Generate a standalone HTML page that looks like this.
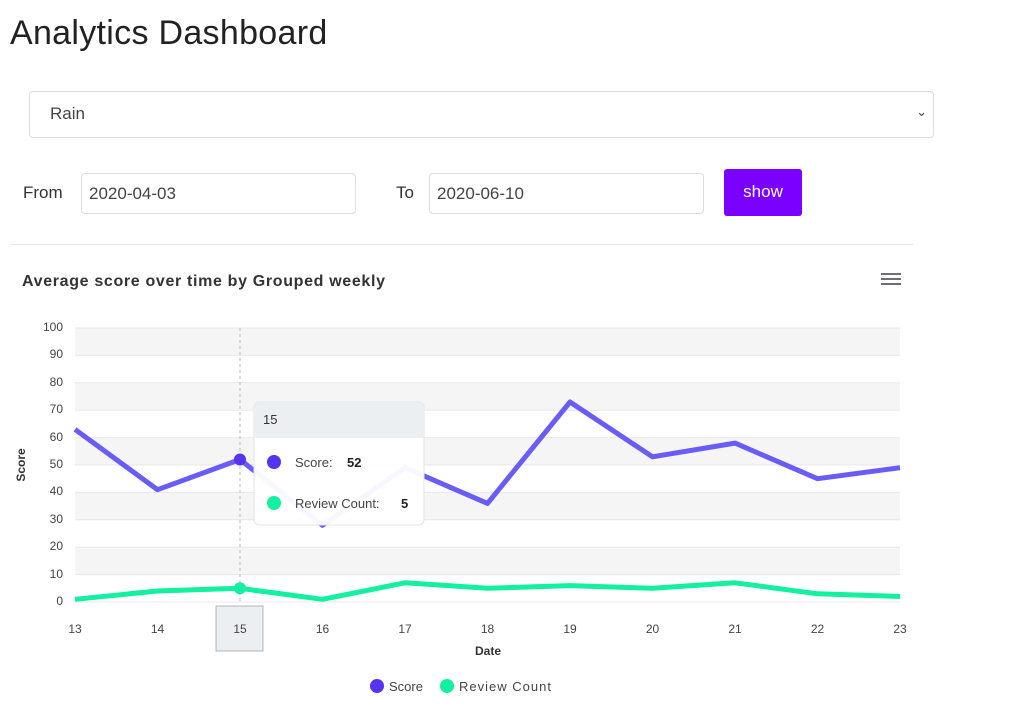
<!DOCTYPE html>
<html><head><meta charset="utf-8"><style>
body{margin:0;width:1011px;height:716px;background:#fff;font-family:"Liberation Sans",sans-serif;position:relative;overflow:hidden}
.a{position:absolute}
h1{position:absolute;left:10px;top:14px;margin:0;font-weight:400;font-size:34px;color:#222;letter-spacing:0.3px}
.inp{position:absolute;border:1px solid #dcdce4;border-radius:4px;background:#fff;font-size:17px;color:#444;box-sizing:border-box}
</style></head><body>
<h1>Analytics Dashboard</h1>
<div class="inp" style="left:29px;top:91px;width:905px;height:47px;padding:12px 20px">Rain<span style="position:absolute;right:6px;top:12px;font-size:13px">⌄</span></div>
<div class="a" style="left:23px;top:183px;font-size:17px;color:#333">From</div>
<div class="inp" style="left:81px;top:173px;width:275px;height:41px;padding:10px 7px">2020-04-03</div>
<div class="a" style="left:396px;top:183px;font-size:17px;color:#333">To</div>
<div class="inp" style="left:429px;top:173px;width:275px;height:41px;padding:10px 7px">2020-06-10</div>
<div class="a" style="left:724px;top:169px;width:78px;height:47px;background:#7a00ff;border-radius:3px;color:#fff;font-size:17px;text-align:center;line-height:46px">show</div>
<div class="a" style="left:10px;top:244px;width:903px;height:1px;background:#e6e6ea"></div>
<svg class="a" style="left:0;top:0" width="1011" height="716" font-family="Liberation Sans, sans-serif">
<text x="22" y="286" font-size="16" font-weight="bold" fill="#333" textLength="363">Average score over time by Grouped weekly</text>
<g stroke="#6e6e7a" stroke-width="2"><line x1="881" y1="274" x2="901" y2="274"/><line x1="881" y1="279" x2="901" y2="279"/><line x1="881" y1="284" x2="901" y2="284"/></g>
<g fill="#f5f5f5"><rect x="75" y="328" width="825" height="27.4"/><rect x="75" y="382.8" width="825" height="27.4"/><rect x="75" y="437.6" width="825" height="27.4"/><rect x="75" y="492.4" width="825" height="27.4"/><rect x="75" y="547.2" width="825" height="27.4"/></g>
<g stroke="#e8e8e8" stroke-width="1">
<line x1="75" x2="900" y1="328" y2="328"/><line x1="75" x2="900" y1="355.4" y2="355.4"/><line x1="75" x2="900" y1="382.8" y2="382.8"/><line x1="75" x2="900" y1="410.2" y2="410.2"/><line x1="75" x2="900" y1="437.6" y2="437.6"/><line x1="75" x2="900" y1="465" y2="465"/><line x1="75" x2="900" y1="492.4" y2="492.4"/><line x1="75" x2="900" y1="519.8" y2="519.8"/><line x1="75" x2="900" y1="547.2" y2="547.2"/><line x1="75" x2="900" y1="574.6" y2="574.6"/><line x1="75" x2="900" y1="602" y2="602"/></g>
<g font-size="12" fill="#444" text-anchor="end">
<text x="63" y="331">100</text><text x="63" y="358">90</text><text x="63" y="386">80</text><text x="63" y="413">70</text><text x="63" y="441">60</text><text x="63" y="468">50</text><text x="63" y="495">40</text><text x="63" y="523">30</text><text x="63" y="550">20</text><text x="63" y="578">10</text><text x="63" y="605">0</text></g>
<text transform="translate(25,465) rotate(-90)" font-size="12" font-weight="bold" fill="#333" text-anchor="middle">Score</text>
<line x1="240" y1="328" x2="240" y2="602" stroke="#bbb" stroke-dasharray="3,3"/>
<polyline fill="none" stroke="#6a5cf6" stroke-width="5" stroke-linejoin="round" points="75,429.4 157.5,489.7 240,459.5 322.5,525.3 405,467.7 487.5,503.4 570,402 652.5,456.8 735,443.1 817.5,478.7 900,467.7"/>
<polyline fill="none" stroke="#12f0a0" stroke-width="5" stroke-linejoin="round" points="75,599.3 157.5,591 240,588.3 322.5,599.3 405,582.8 487.5,588.3 570,585.6 652.5,588.3 735,582.8 817.5,593.8 900,596.5"/>
<circle cx="240" cy="459.5" r="6" fill="#5533f0"/><circle cx="240" cy="588.3" r="6" fill="#12f0a0"/>
<g font-size="12" fill="#444" text-anchor="middle">
<text x="75" y="633">13</text><text x="157.5" y="633">14</text><text x="322.5" y="633">16</text><text x="405" y="633">17</text><text x="487.5" y="633">18</text><text x="570" y="633">19</text><text x="652.5" y="633">20</text><text x="735" y="633">21</text><text x="817.5" y="633">22</text><text x="900" y="633">23</text></g>
<rect x="216" y="606" width="47" height="45" fill="#eceff1" stroke="#b0b6ba"/>
<text x="240" y="633" font-size="12" fill="#444" text-anchor="middle">15</text>
<text x="488" y="655" font-size="12" font-weight="bold" fill="#333" text-anchor="middle">Date</text>
<rect x="254" y="402" width="170" height="123" rx="5" fill="#fff" fill-opacity="0.95" stroke="#e3e3e3"/>
<path d="M254 438V407a5 5 0 0 1 5-5h160a5 5 0 0 1 5 5v31z" fill="#eceff1"/>
<text x="263" y="424" font-size="13" fill="#333">15</text>
<circle cx="274" cy="462" r="7" fill="#5533f0"/>
<text x="295" y="467" font-size="13" fill="#444">Score:</text><text x="347" y="467" font-size="13" font-weight="bold" fill="#222">52</text>
<circle cx="274" cy="503" r="7" fill="#12f0a0"/>
<text x="295" y="508" font-size="13" fill="#444">Review Count:</text><text x="401" y="508" font-size="13" font-weight="bold" fill="#222">5</text>
<circle cx="377" cy="686" r="7" fill="#5533f0"/><text x="389" y="691" font-size="13" fill="#444">Score</text>
<circle cx="447" cy="686" r="7" fill="#12f0a0"/><text x="459" y="691" font-size="13" fill="#444" textLength="92">Review Count</text>
</svg>
</body></html>
